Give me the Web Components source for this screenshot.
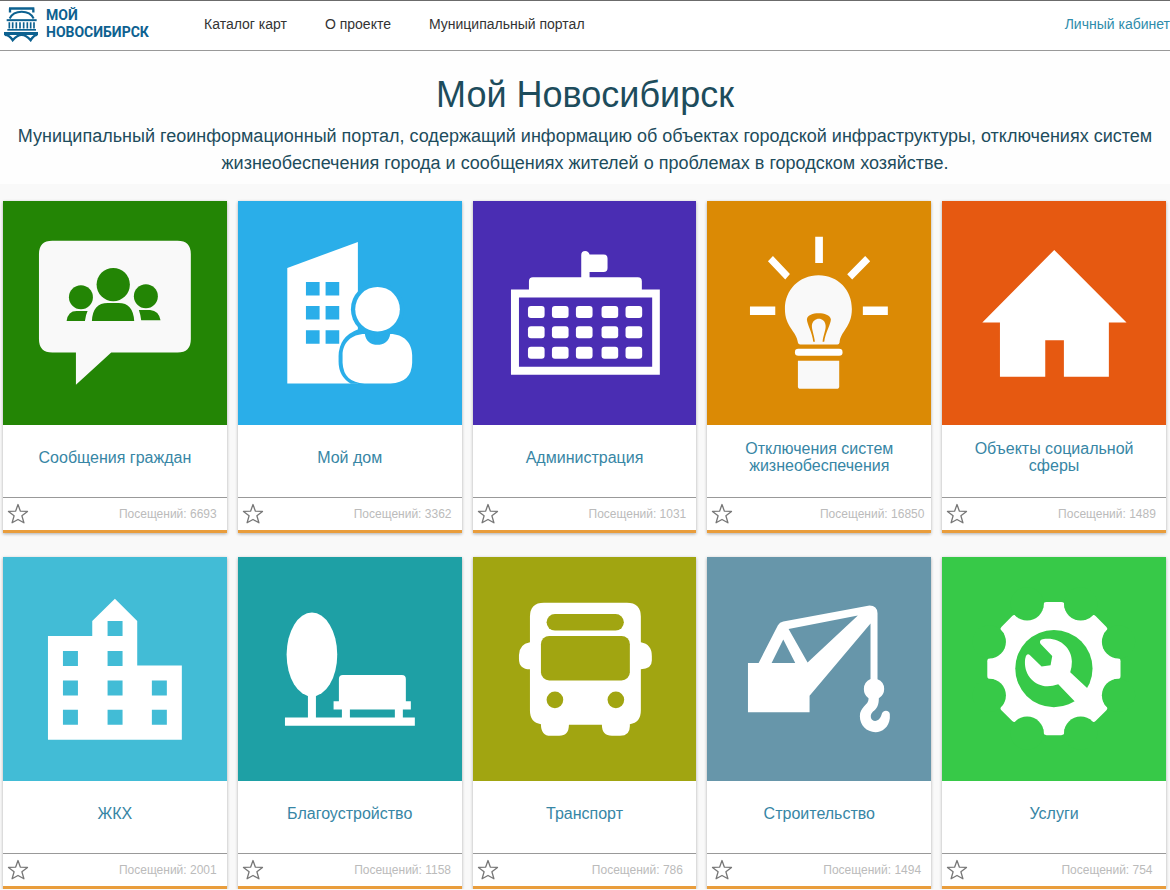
<!DOCTYPE html>
<html lang="ru">
<head>
<meta charset="utf-8">
<meta name="viewport" content="width=device-width, initial-scale=1">
<title>Мой Новосибирск</title>
<style>
  body { margin: 0; background: #f9f9f9; font-family: "Liberation Sans", Arial, sans-serif; }
</style>
</head>
<body>
<novosib-portal></novosib-portal>

<template id="header-tpl">
  <style>
    :host { display: block; background: #fff; border-top: 1px solid #6b6b6b; border-bottom: 1px solid #999; }
    header { display: flex; align-items: center; box-sizing: border-box; height: 49px; padding: 0 0 3px 4px; font-size: 14px; line-height: 20px; }
    .brand { display: flex; align-items: center; gap: 8px; width: 200px; box-sizing: border-box; color: #0d6190; text-decoration: none; font: bold 14px/17px Roboto, sans-serif; }
    .brand svg { width: 34px; height: 35px; flex: none; }
    nav { display: flex; gap: 38px; flex: 1; }
    nav ::slotted(a) { color: #333; text-decoration: none; }
    ::slotted(a[slot="account"]) { color: #2f8cab; text-decoration: none; }
  </style>
  <header>
    <a class="brand" href="#home">
      <svg viewBox="12 20 102 104" fill="none" stroke="currentColor" aria-hidden="true">
        <path d="M27 24H103M30 24V36M100 24V36" stroke-width="7"/>
        <path d="M29 54C34 44 47 34 65 34S96 44 101 54" stroke-width="6"/>
        <path d="M20 59H110" stroke-width="6"/>
        <path d="M28 65V84M38 65V84M49 65V84M60 65V84M71 65V84M82 65V84M92 65V84M102 65V84" stroke-width="5"/>
        <path d="M22 88H108" stroke-width="5"/>
        <path d="M12 99H114" stroke-width="9"/>
        <path d="M14 103C26 103 32 109 38 119Q52 103 65 103T92 119C98 109 104 103 112 103" stroke-width="7"/>
      </svg>
      <span>МОЙ<br>НОВОСИБИРСК</span>
    </a>
    <nav aria-label="Главное меню"><slot></slot></nav>
    <slot name="account"></slot>
  </header>
</template>

<template id="hero-tpl">
  <style>
    :host { display: block; background: #fefefe; padding: 20px 8px 7px; text-align: center; color: #1d4c5c; }
    h1 { margin: 0 0 4px; font-weight: normal; font-size: 36px; line-height: 48px; }
    p { margin: 0; font-size: 18px; line-height: 27px; }
  </style>
  <h1><slot name="title"></slot></h1>
  <p><slot></slot></p>
</template>

<template id="card-tpl">
  <style>
    :host { display: flex; flex-direction: column; background: #fff; border-bottom: 3px solid #e99d3c; box-shadow: 0 1px 3px rgba(0,0,0,.3); }
    .link { display: flex; flex-direction: column; flex: 1; color: #3786a5; text-decoration: none; }
    .tile { background: var(--tile); aspect-ratio: 1; color: #fff; }
    ::slotted(svg) { display: block; width: 100%; height: 100%; }
    .name { display: flex; align-items: center; justify-content: center; box-sizing: border-box; flex: 1; min-height: 72px; padding: 0 16px 7px; text-align: center; font-size: 16px; line-height: 17px; }
    footer { display: flex; align-items: center; justify-content: space-between; height: 32px; border-top: 1px solid #999; color: #bbb; font-size: 12px; }
    button { display: flex; margin: 0 0 0 4px; padding: 0; border: 0; background: none; cursor: pointer; color: #777; }
    button svg { width: 22px; height: 22px; }
    .visits { width: 118px; text-align: center; white-space: nowrap; }
  </style>
  <a class="link" href="#map">
    <div class="tile"><slot name="icon"></slot></div>
    <span class="name"><span><slot></slot></span></span>
  </a>
  <footer>
    <button type="button" aria-label="В избранное">
      <svg viewBox="0 0 22 22" fill="none" stroke="currentColor" stroke-width="1.3" stroke-linejoin="round" aria-hidden="true"><path d="M11 1.5L13.4 8.2L20.5 8.4L14.9 12.7L16.9 19.8L11 16.5L5.1 19.8L7.1 12.7L1.5 8.4L8.6 8.2Z"/></svg>
    </button>
    <span class="visits"></span>
  </footer>
</template>

<template id="grid-tpl">
  <style>
    :host { display: grid; grid-template-columns: repeat(5, minmax(0, 1fr)); gap: 24px 11px; padding: 17px 4px 0 3px; }
  </style>
  <slot></slot>
</template>

<template id="portal-tpl">
  <style>
    :host { display: block; }
    .hole { fill: var(--tile); }
    svg { fill: currentColor; }
  </style>
  <site-header>
    <a href="#catalog">Каталог карт</a>
    <a href="#about">О проекте</a>
    <a href="#portal">Муниципальный портал</a>
    <a slot="account" href="#account">Личный кабинет</a>
  </site-header>
  <main>
    <portal-hero>
      <span slot="title">Мой Новосибирск</span>
      Муниципальный геоинформационный портал, содержащий информацию об объектах городской инфраструктуры, отключениях систем жизнеобеспечения города и сообщениях жителей о проблемах в городском хозяйстве.
    </portal-hero>
    <map-grid>
      <map-card visits="6693" style="--tile:#238505">Сообщения граждан
        <svg slot="icon" viewBox="9 3 672 672" aria-hidden="true">
          <path fill="#f9f9f9" d="M157 122H533Q573 122 573 162V418Q573 458 533 458H334L228 555V458H157Q117 458 117 418V162Q117 122 157 122Z"/>
          <g class="hole"><circle cx="340" cy="254" r="50"/><circle cx="243" cy="292" r="36"/><circle cx="438" cy="289" r="36"/>
          <path d="M276 363Q278 309 324 309H356Q400 309 403 363ZM200 363Q204 333 230 333H263Q257 345 255 363ZM417 330H451Q477 332 482 361H424Q422 344 417 330Z"/></g>
        </svg>
      </map-card>
      <map-card visits="3362" style="--tile:#2aaee9">Мой дом
        <svg slot="icon" viewBox="9 3 672 672" aria-hidden="true">
          <path d="M157 204L369 126V551H157Z"/>
          <path class="hole" d="M213 246h41v41h-41zM272 246h41v41h-41zM213 318h41v41h-41zM272 318h41v41h-41zM213 391h41v41h-41zM272 391h41v41h-41z"/>
          <circle class="hole" cx="428" cy="328" r="80"/>
          <path class="hole" d="M392 388H370Q311 410 311 470V485Q311 530 348 552H420V388Z"/>
          <circle cx="428" cy="328" r="67"/>
          <path d="M390 402C394 446 461 446 466 402C506 402 532 428 532 466V489Q530 549 467 551H389Q326 549 323 489V466C323 428 350 402 390 402Z"/>
        </svg>
      </map-card>
      <map-card visits="1031" style="--tile:#4a2db3">Администрация
        <svg slot="icon" viewBox="9 3 672 672" aria-hidden="true">
          <path d="M123 269H177V244Q177 232 189 232H334V165Q334 153 346 153Q356 153 359 164H401Q413 164 413 176V204Q413 216 401 216H359V232H504Q516 232 516 244V269H570V525H123Z"/>
          <path class="hole" d="M147 293H547V501H147Z"/>
          <g id="windows"></g>
        </svg>
      </map-card>
      <map-card visits="16850" style="--tile:#db8a05">Отключения систем жизнеобеспечения
        <svg slot="icon" viewBox="6 3 672 672" aria-hidden="true">
          <path d="M331 110H354V189H331ZM135 320H211V345H135ZM474 320H549V345H474ZM204 168L255 222L241 239L189 184ZM481 168L496 184L442 239L427 223Z"/>
          <path fill="#f9f9f9" d="M341 226C400 226 441 271 441 327C441 382 407 393 404 428Q403 434 398 434H286Q280 434 279 428C275 393 240 382 240 327C240 271 282 226 341 226Z"/>
          <path class="hole" d="M325 426C323 398 306 373 306 358C309 334 373 334 378 358C378 373 361 398 358 426H353C355 405 364 389 362 376C360 350 324 350 321 376C320 389 328 405 330 426Z"/>
          <rect x="270" y="447" width="143" height="21" rx="10"/>
          <path fill="#f9f9f9" d="M279 483H403V559Q403 567 395 567H287Q279 567 279 559Z"/>
        </svg>
      </map-card>
      <map-card visits="1489" style="--tile:#e65911">Объекты социальной сферы
        <svg slot="icon" viewBox="21 3 672 672" aria-hidden="true">
          <path d="M358 150L575 368H522V531H387V421H331V531H195V368H142Z"/>
        </svg>
      </map-card>
      <map-card visits="2001" style="--tile:#42bcd6">ЖКХ
        <svg slot="icon" viewBox="9 21 672 672" aria-hidden="true">
          <path d="M144 258H277V213L345 146L412 213V347H546V570H144Z"/>
          <path class="hole" d="M323 213h45v45h-45zM323 303h45v45h-45zM323 392h45v45h-45zM323 480h45v45h-45zM189 303h45v45h-45zM189 392h45v45h-45zM189 480h45v45h-45zM456 392h45v45h-45zM456 480h45v45h-45z"/>
        </svg>
      </map-card>
      <map-card visits="1158" style="--tile:#1ea0a5">Благоустройство
        <svg slot="icon" viewBox="9 21 672 672" aria-hidden="true">
          <ellipse cx="231" cy="314" rx="76" ry="126"/>
          <path d="M219 430H243V503H321V479H296V454H312V387Q312 375 324 375H501Q513 375 513 387V454H528V479H504V503H540V528H150V503H219ZM345 479V503H480V479Z"/>
        </svg>
      </map-card>
      <map-card visits="786" style="--tile:#a1a511">Транспорт
        <svg slot="icon" viewBox="9 21 672 672" aria-hidden="true">
          <path d="M222 158H471Q513 158 513 200V277Q546 283 546 318V332Q546 358 513 358V482Q513 518 480 523V529Q480 558 451 558H426Q396 558 396 525H297Q297 558 268 558H242Q213 558 213 523Q180 518 180 482V358Q147 358 147 327V316Q147 283 180 277V200Q180 158 222 158Z"/>
          <g class="hole"><rect x="230" y="192" width="232" height="50" rx="25"/><rect x="213" y="258" width="267" height="134" rx="25"/><circle cx="255" cy="450" r="25"/><circle cx="438" cy="450" r="25"/></g>
        </svg>
      </map-card>
      <map-card visits="1494" style="--tile:#6796aa">Строительство
        <svg slot="icon" viewBox="6 21 672 672" aria-hidden="true">
          <path fill-rule="evenodd" d="M129 339H161L219 226Q224 217 235 215L494 167Q517 167 518 190V388Q538 396 538 417Q538 435 522 445C522 488 497 478 498 502C501 518 523 519 530 495C533 477 555 480 555 493V505C552 533 532 546 512 547C485 546 465 526 465 499C465 469 493 465 491 445Q477 435 477 417Q477 396 497 387V221L314 438V487H129ZM200 339H271L235 269ZM251 237L308 338L459 197Z"/>
        </svg>
      </map-card>
      <map-card visits="754" style="--tile:#37c948">Услуги
        <svg slot="icon" viewBox="21 21 672 672" aria-hidden="true">
          <g transform="translate(357 356)"><circle r="184"/><g id="teeth"></g><circle class="hole" r="116"/></g>
          <path d="M318 283C313 277 315 269 323 268C371 259 411 292 411 335Q411 353 406 367L480 436L440 476L370 403Q353 409 338 409C298 408 269 376 270 336Q270 326 273 318Q278 309 286 317L320 350L347 346L352 318Z"/>
        </svg>
      </map-card>
    </map-grid>
  </main>
</template>

<script>
  class TemplateElement extends HTMLElement {
    constructor() {
      super();
      const tpl = document.getElementById(this.constructor.template);
      this.attachShadow({ mode: "open" }).append(tpl.content.cloneNode(true));
    }
  }

  class SiteHeader extends TemplateElement { static template = "header-tpl"; }
  class PortalHero extends TemplateElement { static template = "hero-tpl"; }
  class MapGrid extends TemplateElement { static template = "grid-tpl"; }

  class MapCard extends TemplateElement {
    static template = "card-tpl";
    connectedCallback() {
      this.shadowRoot.querySelector(".visits").textContent = "Посещений: " + this.getAttribute("visits");
    }
  }

  class NovosibPortal extends TemplateElement {
    static template = "portal-tpl";
    connectedCallback() {
      // Windows of the administration building: 3 floors of 5.
      let windows = "";
      for (const y of [318, 379, 441])
        for (const x of [174, 246, 318, 395, 467])
          windows += `<rect x="${x}" y="${y}" width="50" height="36" rx="9"/>`;
      this.shadowRoot.getElementById("windows").innerHTML = windows;

      // Gear: eight teeth, with a round notch between each pair.
      let teeth = "";
      for (let a = 0; a < 360; a += 45)
        teeth += `<rect x="-32" y="-200" width="64" height="100" rx="10" transform="rotate(${a})"/>`;
      for (let a = 22.5; a < 360; a += 45)
        teeth += `<circle class="hole" cy="-210" r="50" transform="rotate(${a})"/>`;
      this.shadowRoot.getElementById("teeth").innerHTML = teeth;
    }
  }

  customElements.define("site-header", SiteHeader);
  customElements.define("portal-hero", PortalHero);
  customElements.define("map-grid", MapGrid);
  customElements.define("map-card", MapCard);
  customElements.define("novosib-portal", NovosibPortal);
</script>
</body>
</html>
